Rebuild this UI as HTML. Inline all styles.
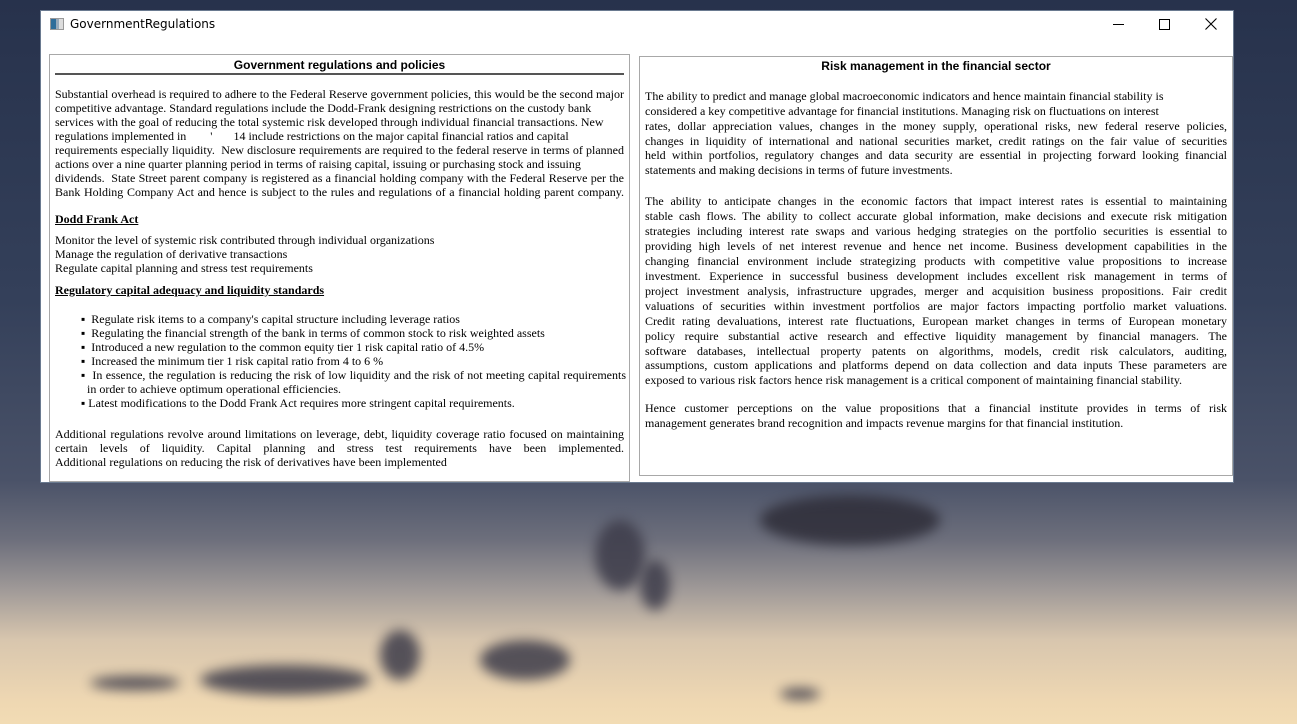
<!DOCTYPE html>
<html><head><meta charset="utf-8"><style>
*{margin:0;padding:0;box-sizing:border-box}
html,body{width:1297px;height:724px;overflow:hidden}
body{position:relative;background:linear-gradient(180deg,#27324c 0px,#34405a 300px,#4a5268 480px,#6d6f7c 540px,#a09a98 590px,#d8c6ae 640px,#eed7b2 700px,#f2dcb4 724px);font-family:"Liberation Serif",serif;color:#000}
.cl{position:absolute;border-radius:50%;background:#3d3c4a;filter:blur(6px);opacity:.85}
.win{position:absolute;left:40px;top:10px;width:1194px;height:473px;background:#fff;border:1px solid #6a7a90}
.tt{position:absolute;left:29px;top:6px;font:12px "DejaVu Sans",sans-serif;color:#000}
.ic{position:absolute;left:9px;top:7px;width:14px;height:12px;background:linear-gradient(90deg,#2f6d9a 0 5px,#9ab 5px 8px,#ddd 8px);border:1px solid #999}
.p{position:absolute;border:1px solid #a8a8a8;background:#fff}
.h{position:absolute;font:bold 12px "Liberation Sans",sans-serif;text-align:center;white-space:nowrap}
.l{position:absolute;font-size:12px;line-height:14px;white-space:nowrap}
.j{text-align:justify;text-align-last:justify;white-space:normal}
.u{font-weight:bold;text-decoration:underline}
</style></head><body>
<div class="cl" style="left:760px;top:495px;width:180px;height:50px;background:#2e2d38"></div>
<div class="cl" style="left:595px;top:520px;width:50px;height:70px"></div>
<div class="cl" style="left:640px;top:560px;width:30px;height:50px"></div>
<div class="cl" style="left:200px;top:665px;width:170px;height:30px"></div>
<div class="cl" style="left:380px;top:630px;width:40px;height:50px"></div>
<div class="cl" style="left:480px;top:640px;width:90px;height:40px"></div>
<div class="cl" style="left:90px;top:676px;width:90px;height:14px"></div>
<div class="cl" style="left:780px;top:688px;width:40px;height:12px"></div>
<div class="win">
<div class="ic"></div>
<div class="tt">GovernmentRegulations</div>
<div style="position:absolute;left:1072px;top:13px;width:11px;height:1px;background:#000"></div>
<div style="position:absolute;left:1118px;top:8px;width:11px;height:11px;border:1px solid #000"></div>
<svg style="position:absolute;left:1164px;top:7px" width="12" height="12"><path d="M0.5 0.5L11.5 11.5M11.5 0.5L0.5 11.5" stroke="#000" stroke-width="1.1"/></svg>

<div class="p" style="left:8px;top:43px;width:581px;height:428px">
<div class="h" style="left:0;width:579px;top:3px">Government regulations and policies</div>
<div style="position:absolute;left:5px;top:18px;width:569px;height:2px;background:#555"></div>
<div class="l" style="left:5px;top:32px;width:569px">
<div class="j">Substantial overhead is required to adhere to the Federal Reserve government policies, this would be the second major</div>
<div>competitive advantage. Standard regulations include the Dodd-Frank designing restrictions on the custody bank</div>
<div>services with the goal of reducing the total systemic risk developed through individual financial transactions. New</div>
<div>regulations implemented in &nbsp;&nbsp;&nbsp;&nbsp;&nbsp;&nbsp;&nbsp;'&nbsp;&nbsp;&nbsp;&nbsp;&nbsp;&nbsp;&nbsp;14 include restrictions on the major capital financial ratios and capital</div>
<div class="j">requirements especially liquidity.&nbsp; New disclosure requirements are required to the federal reserve in terms of planned</div>
<div>actions over a nine quarter planning period in terms of raising capital, issuing or purchasing stock and issuing</div>
<div class="j">dividends.&nbsp; State Street parent company is registered as a financial holding company with the Federal Reserve per the</div>
<div class="j">Bank Holding Company Act and hence is subject to the rules and regulations of a financial holding parent company.</div>
</div>
<div class="l u" style="left:5px;top:157px">Dodd Frank Act</div>
<div class="l" style="left:5px;top:178px">
<div>Monitor the level of systemic risk contributed through individual organizations</div>
<div>Manage the regulation of derivative transactions</div>
<div>Regulate capital planning and stress test requirements</div>
</div>
<div class="l u" style="left:5px;top:228px">Regulatory capital adequacy and liquidity standards</div>
<div class="l" style="left:31px;top:257px;width:545px">
<div>▪ &nbsp;Regulate risk items to a company's capital structure including leverage ratios</div>
<div>▪ &nbsp;Regulating the financial strength of the bank in terms of common stock to risk weighted assets</div>
<div>▪ &nbsp;Introduced a new regulation to the common equity tier 1 risk capital ratio of 4.5%</div>
<div>▪ &nbsp;Increased the minimum tier 1 risk capital ratio from 4 to 6 %</div>
<div class="j">▪ &nbsp;In essence, the regulation is reducing the risk of low liquidity and the risk of not meeting capital requirements</div>
<div>&nbsp;&nbsp;in order to achieve optimum operational efficiencies.</div>
<div>▪ Latest modifications to the Dodd Frank Act requires more stringent capital requirements.</div>
</div>
<div class="l" style="left:5px;top:372px;width:569px">
<div class="j">Additional regulations revolve around limitations on leverage, debt, liquidity coverage ratio focused on maintaining</div>
<div class="j">certain levels of liquidity. Capital planning and stress test requirements have been implemented.</div>
<div>Additional regulations on reducing the risk of derivatives have been implemented</div>
</div>
</div>

<div class="p" style="left:598px;top:45px;width:594px;height:420px">
<div class="h" style="left:0;width:592px;top:2px">Risk management in the financial sector</div>
<div class="l" style="left:5px;top:32px;width:582px;line-height:14.85px">
<div>The ability to predict and manage global macroeconomic indicators and hence maintain financial stability is</div>
<div>considered a key competitive advantage for financial institutions. Managing risk on fluctuations on interest</div>
<div class="j">rates, dollar appreciation values, changes in the money supply, operational risks, new federal reserve policies,</div>
<div class="j">changes in liquidity of international and national securities market, credit ratings on the fair value of securities</div>
<div class="j">held within portfolios, regulatory changes and data security are essential in projecting forward looking financial</div>
<div>statements and making decisions in terms of future investments.</div>
</div>
<div class="l" style="left:5px;top:137px;width:582px;line-height:14.95px">
<div class="j">The ability to anticipate changes in the economic factors that impact interest rates is essential to maintaining</div>
<div class="j">stable cash flows. The ability to collect accurate global information, make decisions and execute risk mitigation</div>
<div class="j">strategies including interest rate swaps and various hedging strategies on the portfolio securities is essential to</div>
<div class="j">providing high levels of net interest revenue and hence net income. Business development capabilities in the</div>
<div class="j">changing financial environment include strategizing products with competitive value propositions to increase</div>
<div class="j">investment. Experience in successful business development includes excellent risk management in terms of</div>
<div class="j">project investment analysis, infrastructure upgrades, merger and acquisition business propositions. Fair credit</div>
<div class="j">valuations of securities within investment portfolios are major factors impacting portfolio market valuations.</div>
<div class="j">Credit rating devaluations, interest rate fluctuations, European market changes in terms of European monetary</div>
<div class="j">policy require substantial active research and effective liquidity management by financial managers. The</div>
<div class="j">software databases, intellectual property patents on algorithms, models, credit risk calculators, auditing,</div>
<div class="j">assumptions, custom applications and platforms depend on data collection and data inputs These parameters are</div>
<div>exposed to various risk factors hence risk management is a critical component of maintaining financial stability.</div>
</div>
<div class="l" style="left:5px;top:344px;width:582px;line-height:14.9px">
<div class="j">Hence customer perceptions on the value propositions that a financial institute provides in terms of risk</div>
<div>management generates brand recognition and impacts revenue margins for that financial institution.</div>
</div>
</div>
</div>
</body></html>
